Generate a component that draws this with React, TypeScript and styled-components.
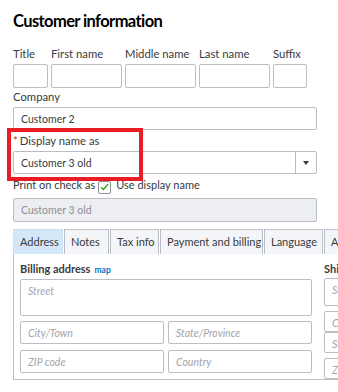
import React from 'react';
import styled, { createGlobalStyle } from 'styled-components';

const GlobalStyle = createGlobalStyle`
  html, body {
    margin: 0;
    padding: 0;
    background: #fff;
    overflow: hidden;
  }
  body {
    font-family: Lato, "Open Sans", Arial, sans-serif;
    color: #393a3d;
  }
`;

const Page = styled.div`
  position: relative;
  width: 338px;
  height: 392px;
  overflow: hidden;
  padding: 10px 0 0 13px;
  box-sizing: border-box;
`;

const Title = styled.h1`
  margin: 0;
  font-size: 16.5px;
  line-height: 22px;
  font-weight: 700;
  letter-spacing: -0.6px;
  color: #000;
`;

const NameRow = styled.div`
  display: flex;
  gap: 3px;
  margin-top: 14px;
`;

const Field = styled.div<{ $w?: number; $mt?: number }>`
  display: flex;
  flex-direction: column;
  width: ${(p) => (p.$w ? `${p.$w}px` : '304px')};
  margin-top: ${(p) => p.$mt ?? 0}px;
  flex: none;
`;

const Label = styled.label`
  font-size: 11.3px;
  line-height: 16px;
  margin-bottom: 2px;
  white-space: nowrap;
  color: #393a3d;
`;

const Star = styled.span`
  color: #d52b1e;
  margin-right: 2px;
`;

const Input = styled.div<{ $h?: number; $disabled?: boolean }>`
  box-sizing: border-box;
  height: ${(p) => p.$h ?? 24}px;
  border: 1px solid #babec5;
  border-radius: 2px;
  background: ${(p) => (p.$disabled ? '#eceef1' : '#fff')};
  color: ${(p) => (p.$disabled ? '#8d9096' : '#393a3d')};
  font-size: 10.5px;
  line-height: 20px;
  padding: 1px 7px;
  white-space: nowrap;
  overflow: hidden;
`;

const Select = styled(Input)`
  display: flex;
  padding: 0;
`;

const SelectValue = styled.div`
  flex: 1;
  padding: 1px 7px;
  border-right: 1px solid #babec5;
`;

const Caret = styled.div`
  width: 20px;
  display: flex;
  align-items: center;
  justify-content: center;
  &::after {
    content: '';
    border-left: 3.5px solid transparent;
    border-right: 3.5px solid transparent;
    border-top: 4px solid #393a3d;
  }
`;

const CheckRow = styled.div`
  display: flex;
  align-items: center;
  font-size: 11px;
  line-height: 16px;
  margin-top: 3px;
  height: 16px;
  white-space: nowrap;
`;

const CheckBox = styled.span`
  box-sizing: border-box;
  width: 13px;
  height: 13px;
  border: 1px solid #8d9096;
  border-radius: 2px;
  margin: 4px 5px 0 3px;
  display: inline-flex;
  align-items: center;
  justify-content: center;
  background: #fff;
`;

const Highlight = styled.div`
  position: absolute;
  left: 7px;
  top: 128px;
  width: 136px;
  height: 53px;
  box-sizing: border-box;
  border: 4px solid #ea1c24;
  pointer-events: none;
`;

const Tabs = styled.div`
  display: flex;
  gap: 1px;
  margin-top: 7px;
  width: 400px;
`;

const Tab = styled.div<{ $active?: boolean; $w: number }>`
  box-sizing: border-box;
  width: ${(p) => p.$w}px;
  height: 25px;
  flex: none;
  font-size: 11px;
  line-height: 24px;
  padding-left: 6px;
  white-space: nowrap;
  overflow: hidden;
  border: 1px solid ${(p) => (p.$active ? '#c9dff3' : '#babec5')};
  border-bottom: none;
  background: ${(p) => (p.$active ? '#d4e7f8' : '#f4f5f8')};
`;

const Panel = styled.div`
  width: 400px;
  height: 126px;
  box-sizing: border-box;
  border-left: 1px solid #babec5;
  border-bottom: 1px solid #babec5;
  padding: 8px 0 0 6px;
  display: flex;
  gap: 12px;
`;

const Column = styled.div<{ $w: number }>`
  width: ${(p) => p.$w}px;
  flex: none;
  display: flex;
  flex-direction: column;
`;

const SectionTitle = styled.div`
  font-size: 11px;
  line-height: 14px;
  font-weight: 700;
  color: #393a3d;
  margin-bottom: 2px;
  white-space: nowrap;
`;

const MapLink = styled.span`
  font-size: 8.5px;
  font-weight: 700;
  color: #0077c5;
  margin-left: 4px;
`;

const Box = styled.div<{ $h: number; $mt?: number }>`
  box-sizing: border-box;
  height: ${(p) => p.$h}px;
  margin-top: ${(p) => p.$mt ?? 0}px;
  border: 1px solid #babec5;
  border-radius: 2px;
  font-size: 10.5px;
  line-height: 20px;
  padding: 1px 7px;
  font-style: italic;
  color: #a2a5ab;
  white-space: nowrap;
  overflow: hidden;
`;

const Pair = styled.div<{ $mt: number }>`
  display: flex;
  gap: 4px;
  margin-top: ${(p) => p.$mt}px;
  & > * {
    flex: 1;
  }
`;

const nameFields = [
  { label: 'Title', w: 35 },
  { label: 'First name', w: 71 },
  { label: 'Middle name', w: 71 },
  { label: 'Last name', w: 71 },
  { label: 'Suffix', w: 34 },
];

const tabs = [
  { label: 'Address', w: 50, active: true },
  { label: 'Notes', w: 45 },
  { label: 'Tax info', w: 49 },
  { label: 'Payment and billing', w: 103 },
  { label: 'Language', w: 59 },
  { label: 'Attachments', w: 80 },
];

export default function App() {
  return (
    <>
      <GlobalStyle />
      <Page>
        <Title>Customer information</Title>
        <NameRow>
          {nameFields.map((f) => (
            <Field key={f.label} $w={f.w}>
              <Label>{f.label}</Label>
              <Input />
            </Field>
          ))}
        </NameRow>
        <Field $mt={1}>
          <Label>Company</Label>
          <Input $h={23}>Customer 2</Input>
        </Field>
        <Field $mt={3}>
          <Label>
            <Star>*</Star>Display name as
          </Label>
          <Select $h={23}>
            <SelectValue>Customer 3 old</SelectValue>
            <Caret />
          </Select>
        </Field>
        <CheckRow>
          Print on check as
          <CheckBox>
            <svg width="9" height="8" viewBox="0 0 9 8">
              <path d="M1 4.2 L3.4 6.5 L8 1.2" fill="none" stroke="#2ca01c" strokeWidth="1.3" />
            </svg>
          </CheckBox>
          Use display name
        </CheckRow>
        <Field $mt={5}>
          <Input $disabled>Customer 3 old</Input>
        </Field>
        <Tabs>
          {tabs.map((t) => (
            <Tab key={t.label} $w={t.w} $active={t.active}>
              {t.label}
            </Tab>
          ))}
        </Tabs>
        <Panel>
          <Column $w={292}>
            <SectionTitle>
              Billing address<MapLink>map</MapLink>
            </SectionTitle>
            <Box $h={37}>Street</Box>
            <Pair $mt={5}>
              <Box $h={23}>City/Town</Box>
              <Box $h={23}>State/Province</Box>
            </Pair>
            <Pair $mt={6}>
              <Box $h={23}>ZIP code</Box>
              <Box $h={23}>Country</Box>
            </Pair>
          </Column>
          <Column $w={140}>
            <SectionTitle>Shipping address</SectionTitle>
            <Box $h={33}>Street</Box>
            <Box $h={24} $mt={5}>City/Town</Box>
            <Box $h={24}>State/Province</Box>
            <Box $h={24} $mt={5}>ZIP code</Box>
          </Column>
        </Panel>
        <Highlight />
      </Page>
    </>
  );
}
